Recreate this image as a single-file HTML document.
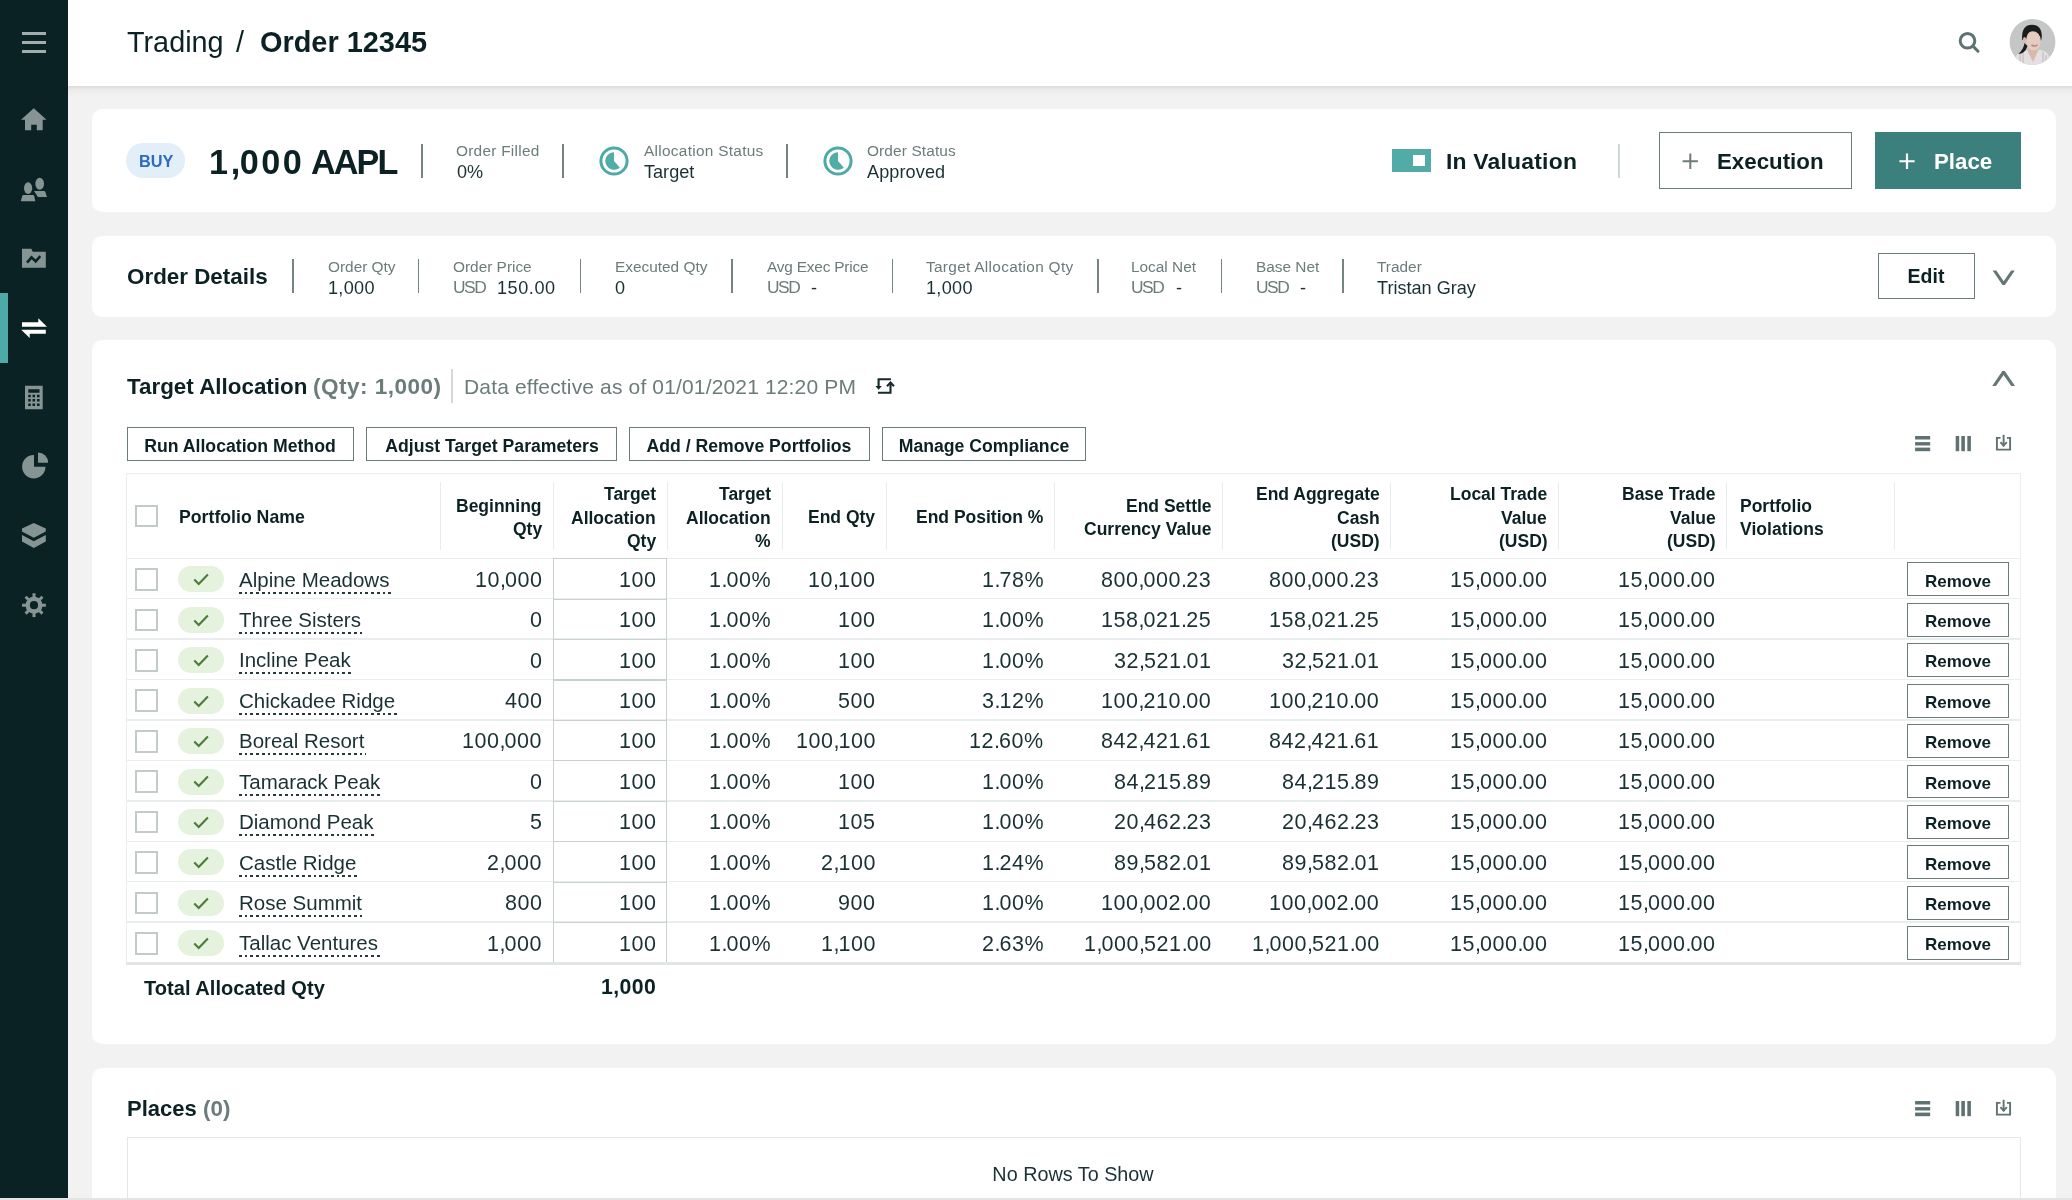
<!DOCTYPE html><html><head><meta charset="utf-8"><style>
html,body{margin:0;padding:0;}
body{width:2072px;height:1200px;overflow:hidden;position:relative;background:#f2f2f2;font-family:'Liberation Sans',sans-serif;}
.t{position:absolute;white-space:nowrap;will-change:transform;}
.r{position:absolute;}
.pn{letter-spacing:-0.95px;}
.nm::after{content:'';position:absolute;left:0;right:-1.5px;top:21.6px;height:2px;background:repeating-linear-gradient(90deg,#243a3c 0 2.7px,transparent 2.7px 5.75px);}
</style></head><body>
<div class="r" style="left:68.00px;top:0.00px;width:2004.00px;height:86.00px;background:#ffffff;"></div>
<div class="r" style="left:68.00px;top:86.00px;width:2004.00px;height:10.00px;background:linear-gradient(#dadada,#ececec 40%,#f2f2f2);"></div>
<div class="r" style="left:0.00px;top:0.00px;width:68.30px;height:1200.00px;background:#0b2224;"></div>
<div class="r" style="left:0.00px;top:293.00px;width:8.00px;height:70.00px;background:#4eaaa6;"></div>
<div class="r" style="left:22.00px;top:32.20px;width:24.00px;height:2.60px;background:#a2aead;"></div>
<div class="r" style="left:22.00px;top:41.20px;width:24.00px;height:2.60px;background:#a2aead;"></div>
<div class="r" style="left:22.00px;top:50.10px;width:24.00px;height:2.60px;background:#a2aead;"></div>
<svg class="r" style="left:0;top:0" width="68" height="640" viewBox="0 0 68 640">
<path fill="#869594" d="M21 119.7 L33.8 108.3 L46.5 119.7 L42.7 119.7 L42.7 130.2 L36.8 130.2 L36.8 124.8 L31.2 124.8 L31.2 130.2 L25 130.2 L25 119.7 Z"/>
<ellipse fill="#869594" cx="28.1" cy="188.2" rx="4.1" ry="5.85"/>
<path fill="#869594" d="M23.4 195 L33 195 Q33.8 195 34.2 196 L35.3 201.2 L20.8 201.2 L22.2 196 Q22.6 195 23.4 195 Z"/>
<ellipse fill="#869594" cx="39.7" cy="183.75" rx="4.35" ry="5.95"/>
<path fill="#869594" d="M34 191 L44 191 Q45 191 45.4 192.2 L47 197 L38 197 Z"/>
<path fill="#869594" d="M22 248.8 L31.3 248.8 L32.7 251.7 L45.8 251.7 L45.8 267.7 L22 267.7 Z"/>
<polyline fill="none" stroke="#0c2325" stroke-width="2.6" points="27,262.7 31.5,257.3 35.7,261.3 40.3,256.2"/>
<path fill="#ffffff" d="M22 322.2 L38.3 322.2 L38.3 318.3 L47 326.8 L22 326.8 Z"/>
<path fill="#ffffff" d="M21.2 329.7 L45.8 329.7 L45.8 333.8 L29.7 333.8 L29.7 338 Z"/>
<path fill="#869594" fill-rule="evenodd" d="M25 385.8 H42.7 V409.2 H25 Z M28.3 389.2 V392.7 H39.5 V389.2 Z
 M28.2 394.7 h2.6 v2.6 h-2.6 Z M32.5 394.7 h2.6 v2.6 h-2.6 Z M37 394.7 h2.6 v2.6 h-2.6 Z
 M28.2 399 h2.6 v2.6 h-2.6 Z M32.5 399 h2.6 v2.6 h-2.6 Z M37 399 h2.6 v2.6 h-2.6 Z
 M28.2 403.4 h2.6 v2.6 h-2.6 Z M32.5 403.4 h2.6 v2.6 h-2.6 Z M37 403.4 h2.6 v2.6 h-2.6 Z"/>
<path fill="#869594" d="M34 455 A11.7 11.7 0 1 0 45.5 466.7 L34 466.7 Z"/>
<path fill="#869594" d="M38 452.5 A10.2 10.2 0 0 1 48.2 462.7 L38 462.7 Z"/>
<path fill="#869594" d="M22 528.6 L33.8 523 L45.8 528.6 L45.8 531.6 L33.8 537.7 L22 531.6 Z"/>
<path fill="#869594" d="M22 535 L33.8 541.3 L45.8 535 L45.8 541.6 L33.8 548 L22 541.6 Z"/>
<line x1="34.00" y1="598.20" x2="34.00" y2="593.30" stroke="#869594" stroke-width="3"/><line x1="38.95" y1="600.25" x2="42.41" y2="596.79" stroke="#869594" stroke-width="3"/><line x1="41.00" y1="605.20" x2="45.90" y2="605.20" stroke="#869594" stroke-width="3"/><line x1="38.95" y1="610.15" x2="42.41" y2="613.61" stroke="#869594" stroke-width="3"/><line x1="34.00" y1="612.20" x2="34.00" y2="617.10" stroke="#869594" stroke-width="3"/><line x1="29.05" y1="610.15" x2="25.59" y2="613.61" stroke="#869594" stroke-width="3"/><line x1="27.00" y1="605.20" x2="22.10" y2="605.20" stroke="#869594" stroke-width="3"/><line x1="29.05" y1="600.25" x2="25.59" y2="596.79" stroke="#869594" stroke-width="3"/><circle cx="34" cy="605.2" r="6.3" fill="none" stroke="#869594" stroke-width="4.4"/></svg>
<div class="t " style="top:28.21px;font-size:28.8px;line-height:28.8px;font-weight:normal;color:#0b2123;left:126.50px;">Trading</div>
<div class="t " style="top:28.21px;font-size:28.8px;line-height:28.8px;font-weight:normal;color:#0b2123;left:236.00px;">/</div>
<div class="t " style="top:28.12px;font-size:28.9px;line-height:28.9px;font-weight:bold;color:#0b2123;left:260.00px;">Order 12345</div>
<svg class="r" style="left:1950px;top:25px" width="40" height="40" viewBox="1950 25 40 40"><circle cx="1967.5" cy="40.8" r="7.3" fill="none" stroke="#5f7271" stroke-width="3"/><line x1="1973.2" y1="46.4" x2="1978" y2="51.2" stroke="#5f7271" stroke-width="3" stroke-linecap="round"/></svg>
<svg class="r" style="left:2008px;top:18px" width="50" height="50" viewBox="2008 18 50 50">
<defs><clipPath id="av"><circle cx="2032.5" cy="42" r="22.9"/></clipPath></defs>
<circle cx="2032.5" cy="42" r="22.9" fill="#c4c7c6"/>
<g clip-path="url(#av)">
<path d="M2014 66 L2016 56 Q2019 51 2026 50 L2040 50 Q2047 51 2049 56 L2051 66 Z" fill="#e4e0e2"/>
<path d="M2020 54 V66 M2023 52 V66 M2043 52 V66 M2046 55 V66" stroke="#b9b0b4" stroke-width="0.9"/>
<path d="M2027 50 L2038.5 50 L2033 62 Z" fill="#d9b9a9"/>
<ellipse cx="2033.6" cy="40.6" rx="7.3" ry="9.6" fill="#e6ccc0"/>
<path d="M2022.2 40 Q2021 25 2032 24.8 Q2042 25 2041.8 37 L2041 41 Q2040 31 2032 31.2 Q2027 31.5 2026 40 Z" fill="#1c1c1c"/>
<path d="M2024.5 43 Q2023.5 50 2018 54 Q2025 54 2027.5 46 Z" fill="#1c1c1c"/>
<ellipse cx="2024.5" cy="39.5" rx="1.6" ry="2.6" fill="#d9b8a8"/>
<path d="M2031.5 45 Q2034.5 47 2037.5 45" stroke="#b98a82" stroke-width="1.6" fill="none"/>
</g></svg>
<div class="r" style="left:92.00px;top:108.80px;width:1963.50px;height:103.50px;background:#ffffff;border-radius:10px;"></div>
<div class="r" style="left:92.00px;top:235.80px;width:1963.50px;height:80.90px;background:#ffffff;border-radius:10px;"></div>
<div class="r" style="left:92.00px;top:340.30px;width:1963.50px;height:703.50px;background:#ffffff;border-radius:10px;"></div>
<div class="r" style="left:92.00px;top:1067.50px;width:1963.50px;height:192.50px;background:#ffffff;border-radius:10px;"></div>
<div class="r" style="left:126.10px;top:143.40px;width:59.30px;height:34.60px;background:#e2eff9;border-radius:17.3px;"></div>
<div class="t " style="top:153.39px;font-size:16.3px;line-height:16.3px;font-weight:bold;color:#2c6bbf;left:138.50px;">BUY</div>
<div class="t " style="top:145.33px;font-size:34.2px;line-height:34.2px;font-weight:bold;color:#0b2123;letter-spacing:2.6px;left:208.50px;">1<span style="letter-spacing:-0.5px">,</span>000</div>
<div class="t " style="top:145.33px;font-size:34.2px;line-height:34.2px;font-weight:bold;color:#0b2123;letter-spacing:-1.9px;left:311.00px;">AAPL</div>
<div class="r" style="left:421.00px;top:143.70px;width:1.60px;height:34.30px;background:#748483;"></div>
<div class="t " style="top:142.66px;font-size:15.4px;line-height:15.4px;font-weight:normal;color:#6b7c7b;letter-spacing:0.26px;left:456.00px;">Order Filled</div>
<div class="t " style="top:163.27px;font-size:18.1px;line-height:18.1px;font-weight:normal;color:#1a3133;left:456.50px;">0%</div>
<div class="r" style="left:562.20px;top:143.70px;width:1.60px;height:34.30px;background:#748483;"></div>
<svg class="r" style="left:598.3px;top:144.6px" width="32" height="32" viewBox="598.3 144.6 32 32"><circle cx="614.3" cy="160.6" r="13.1" fill="none" stroke="#4fa9a4" stroke-width="3"/><path d="M614.3 160.6 L614.3 151.9 A8.7 8.7 0 1 0 620.10 167.05 Z" fill="#52aca7"/></svg>
<div class="t " style="top:142.66px;font-size:15.4px;line-height:15.4px;font-weight:normal;color:#6b7c7b;letter-spacing:0.29px;left:643.50px;">Allocation Status</div>
<div class="t " style="top:163.27px;font-size:18.1px;line-height:18.1px;font-weight:normal;color:#1a3133;left:643.50px;">Target</div>
<div class="r" style="left:786.20px;top:143.70px;width:1.60px;height:34.30px;background:#748483;"></div>
<svg class="r" style="left:822.4px;top:144.6px" width="32" height="32" viewBox="822.4 144.6 32 32"><circle cx="838.4" cy="160.6" r="13.1" fill="none" stroke="#4fa9a4" stroke-width="3"/><path d="M838.4 160.6 L838.4 151.9 A8.7 8.7 0 1 0 844.20 167.05 Z" fill="#52aca7"/></svg>
<div class="t " style="top:142.66px;font-size:15.4px;line-height:15.4px;font-weight:normal;color:#6b7c7b;letter-spacing:0.13px;left:867.00px;">Order Status</div>
<div class="t " style="top:163.27px;font-size:18.1px;line-height:18.1px;font-weight:normal;color:#1a3133;letter-spacing:0.1px;left:867.30px;">Approved</div>
<div class="r" style="left:1392.20px;top:149.20px;width:38.60px;height:23.10px;background:#52aba6;"></div>
<div class="r" style="left:1413.30px;top:154.90px;width:11.60px;height:11.50px;background:#ffffff;"></div>
<div class="t " style="top:150.10px;font-size:22.9px;line-height:22.9px;font-weight:bold;color:#0b2123;letter-spacing:0.22px;left:1446.00px;">In Valuation</div>
<div class="r" style="left:1618.20px;top:143.60px;width:1.50px;height:34.10px;background:#d3d9d8;"></div>
<div class="r" style="left:1658.60px;top:131.80px;width:193.40px;height:57.60px;box-sizing:border-box;border:1.6px solid #6b7c7b;background:transparent;"></div>
<svg class="r" style="left:1680px;top:150px" width="22" height="22" viewBox="1680 150 22 22"><path d="M1690.3 153.6 V168.9 M1682.6 161.25 H1697.9" stroke="#6b7c7b" stroke-width="2"/></svg>
<div class="t " style="top:150.61px;font-size:22.3px;line-height:22.3px;font-weight:bold;color:#0b2123;left:1717.00px;">Execution</div>
<div class="r" style="left:1875.00px;top:131.80px;width:145.70px;height:57.60px;background:#3b807c;"></div>
<svg class="r" style="left:1896px;top:150px" width="22" height="22" viewBox="1896 150 22 22"><path d="M1907 153.6 V168.9 M1899.4 161.25 H1914.6" stroke="#ffffff" stroke-width="2.2"/></svg>
<div class="t " style="top:150.61px;font-size:22.3px;line-height:22.3px;font-weight:bold;color:#ffffff;left:1933.50px;">Place</div>
<div class="t " style="top:265.73px;font-size:22.4px;line-height:22.4px;font-weight:bold;color:#0b2123;left:127.00px;">Order Details</div>
<div class="r" style="left:292.30px;top:259.20px;width:1.60px;height:34.10px;background:#748483;"></div>
<div class="r" style="left:417.80px;top:259.20px;width:1.60px;height:34.10px;background:#748483;"></div>
<div class="r" style="left:579.70px;top:259.20px;width:1.60px;height:34.10px;background:#748483;"></div>
<div class="r" style="left:731.40px;top:259.20px;width:1.60px;height:34.10px;background:#748483;"></div>
<div class="r" style="left:891.50px;top:259.20px;width:1.60px;height:34.10px;background:#748483;"></div>
<div class="r" style="left:1097.00px;top:259.20px;width:1.60px;height:34.10px;background:#748483;"></div>
<div class="r" style="left:1220.70px;top:259.20px;width:1.60px;height:34.10px;background:#748483;"></div>
<div class="r" style="left:1342.30px;top:259.20px;width:1.60px;height:34.10px;background:#748483;"></div>
<div class="t " style="top:258.76px;font-size:15.4px;line-height:15.4px;font-weight:normal;color:#6b7c7b;left:327.50px;">Order Qty</div>
<div class="t " style="top:278.87px;font-size:18.1px;line-height:18.1px;font-weight:normal;color:#1a3133;letter-spacing:0.3px;left:327.50px;">1,000</div>
<div class="t " style="top:258.76px;font-size:15.4px;line-height:15.4px;font-weight:normal;color:#6b7c7b;left:453.00px;">Order Price</div>
<div class="t " style="top:279.46px;font-size:17.4px;line-height:17.4px;font-weight:normal;color:#6b7c7b;letter-spacing:-1.5px;left:453.00px;">USD</div>
<div class="t " style="top:278.87px;font-size:18.1px;line-height:18.1px;font-weight:normal;color:#1a3133;letter-spacing:0.55px;left:497.30px;">150.00</div>
<div class="t " style="top:258.76px;font-size:15.4px;line-height:15.4px;font-weight:normal;color:#6b7c7b;left:615.00px;">Executed Qty</div>
<div class="t " style="top:278.87px;font-size:18.1px;line-height:18.1px;font-weight:normal;color:#1a3133;letter-spacing:0.3px;left:615.00px;">0</div>
<div class="t " style="top:258.76px;font-size:15.4px;line-height:15.4px;font-weight:normal;color:#6b7c7b;letter-spacing:-0.2px;left:766.50px;">Avg Exec Price</div>
<div class="t " style="top:279.46px;font-size:17.4px;line-height:17.4px;font-weight:normal;color:#6b7c7b;letter-spacing:-1.5px;left:766.50px;">USD</div>
<div class="t " style="top:278.87px;font-size:18.1px;line-height:18.1px;font-weight:normal;color:#1a3133;letter-spacing:0.55px;left:810.80px;">-</div>
<div class="t " style="top:258.76px;font-size:15.4px;line-height:15.4px;font-weight:normal;color:#6b7c7b;letter-spacing:0.3px;left:926.30px;">Target Allocation Qty</div>
<div class="t " style="top:278.87px;font-size:18.1px;line-height:18.1px;font-weight:normal;color:#1a3133;letter-spacing:0.3px;left:926.30px;">1,000</div>
<div class="t " style="top:258.76px;font-size:15.4px;line-height:15.4px;font-weight:normal;color:#6b7c7b;left:1131.30px;">Local Net</div>
<div class="t " style="top:279.46px;font-size:17.4px;line-height:17.4px;font-weight:normal;color:#6b7c7b;letter-spacing:-1.5px;left:1131.30px;">USD</div>
<div class="t " style="top:278.87px;font-size:18.1px;line-height:18.1px;font-weight:normal;color:#1a3133;letter-spacing:0.55px;left:1175.60px;">-</div>
<div class="t " style="top:258.76px;font-size:15.4px;line-height:15.4px;font-weight:normal;color:#6b7c7b;left:1256.00px;">Base Net</div>
<div class="t " style="top:279.46px;font-size:17.4px;line-height:17.4px;font-weight:normal;color:#6b7c7b;letter-spacing:-1.5px;left:1256.00px;">USD</div>
<div class="t " style="top:278.87px;font-size:18.1px;line-height:18.1px;font-weight:normal;color:#1a3133;letter-spacing:0.55px;left:1300.30px;">-</div>
<div class="t " style="top:258.76px;font-size:15.4px;line-height:15.4px;font-weight:normal;color:#6b7c7b;left:1377.00px;">Trader</div>
<div class="t " style="top:278.87px;font-size:18.1px;line-height:18.1px;font-weight:normal;color:#1a3133;left:1377.00px;">Tristan Gray</div>
<div class="r" style="left:1878.20px;top:253.30px;width:96.40px;height:45.70px;box-sizing:border-box;border:1.6px solid #6b7c7b;background:transparent;"></div>
<div class="t " style="top:267.08px;font-size:19.5px;line-height:19.5px;font-weight:bold;color:#0b2123;left:1326.40px;width:1200px;text-align:center;">Edit</div>
<svg class="r" style="left:1988px;top:264px" width="32" height="28" viewBox="1988 264 32 28"><path d="M1992.6 270.4 H1996.3 L2003.7 281.2 L2011.1 270.4 H2014.8 L2004.9 285 H2002.5 Z" fill="#647675"/></svg>
<div class="t " style="top:376.03px;font-size:22.4px;line-height:22.4px;font-weight:bold;color:#0b2123;left:126.50px;">Target Allocation</div>
<div class="t " style="top:375.86px;font-size:22.6px;line-height:22.6px;font-weight:bold;color:#6b7c7b;letter-spacing:0.45px;left:313.00px;">(Qty: 1,000)</div>
<div class="r" style="left:451.00px;top:369.00px;width:1.50px;height:34.00px;background:#d3d9d8;"></div>
<div class="t " style="top:375.81px;font-size:21.0px;line-height:21.0px;font-weight:normal;color:#6b7c7b;letter-spacing:0.15px;left:463.60px;">Data effective as of 01/01/2021 12:20 PM</div>
<svg class="r" style="left:870px;top:372px" width="30" height="26" viewBox="870 372 30 26">
<path d="M890.9 379.25 H878.6 V386.5" fill="none" stroke="#15292b" stroke-width="2.1"/>
<path d="M875.4 386 L881.8 386 L878.6 389.8 Z" fill="#15292b"/>
<path d="M878 392.75 H890.5 V383" fill="none" stroke="#15292b" stroke-width="2.1"/>
<polyline points="887,386.2 890.5,382.6 894,386.2" fill="none" stroke="#15292b" stroke-width="2.1"/>
</svg>
<svg class="r" style="left:1986px;top:364px" width="34" height="28" viewBox="1986 364 34 28"><path d="M1992.2 386 L2002.4 371.1 H2004.8 L2015 386 H2011.3 L2003.6 374.9 L1995.9 386 Z" fill="#647675"/></svg>
<div class="r" style="left:126.60px;top:426.60px;width:227.60px;height:34.00px;box-sizing:border-box;border:1.6px solid #6b7c7b;background:transparent;"></div>
<div class="t " style="top:437.55px;font-size:17.65px;line-height:17.65px;font-weight:bold;color:#0b2123;left:-359.60px;width:1200px;text-align:center;">Run Allocation Method</div>
<div class="r" style="left:366.00px;top:426.60px;width:251.10px;height:34.00px;box-sizing:border-box;border:1.6px solid #6b7c7b;background:transparent;"></div>
<div class="t " style="top:437.55px;font-size:17.65px;line-height:17.65px;font-weight:bold;color:#0b2123;left:-108.45px;width:1200px;text-align:center;">Adjust Target Parameters</div>
<div class="r" style="left:629.00px;top:426.60px;width:240.70px;height:34.00px;box-sizing:border-box;border:1.6px solid #6b7c7b;background:transparent;"></div>
<div class="t " style="top:437.55px;font-size:17.65px;line-height:17.65px;font-weight:bold;color:#0b2123;left:149.35px;width:1200px;text-align:center;">Add / Remove Portfolios</div>
<div class="r" style="left:881.90px;top:426.60px;width:204.30px;height:34.00px;box-sizing:border-box;border:1.6px solid #6b7c7b;background:transparent;"></div>
<div class="t " style="top:437.55px;font-size:17.65px;line-height:17.65px;font-weight:bold;color:#0b2123;left:384.05px;width:1200px;text-align:center;">Manage Compliance</div>
<svg class="r" style="left:1910px;top:424px" width="110" height="28" viewBox="1910 424 110 28">
<rect x="1915.1" y="436" width="15.1" height="3.5" fill="#5f7271"/><rect x="1915.1" y="442.1" width="15.1" height="3.4" fill="#5f7271"/><rect x="1915.1" y="447.6" width="15.1" height="3.6" fill="#5f7271"/>
<rect x="1955.7" y="436" width="3.5" height="15.2" fill="#5f7271"/><rect x="1961.3" y="436" width="3.6" height="15.2" fill="#5f7271"/><rect x="1967.3" y="436" width="3.6" height="15.2" fill="#5f7271"/>
<path d="M2000.5 437.9 H1996.9 V449.6 H2010.1 V437.9 H2006.9" fill="none" stroke="#5f7271" stroke-width="1.9"/>
<path d="M2003.6 434.8 V446.2" stroke="#5f7271" stroke-width="1.9"/>
<polyline points="2000.4,442.1 2003.6,445.6 2006.8,442.1" fill="none" stroke="#5f7271" stroke-width="1.9"/>
</svg>
<div class="r" style="left:126.00px;top:472.60px;width:1894.80px;height:491.20px;box-sizing:border-box;border:1.9px solid #eceeee;background:transparent;"></div>
<div class="r" style="left:127.00px;top:557.50px;width:1893.50px;height:1.60px;background:#eaeded;"></div>
<div class="r" style="left:439.90px;top:481.80px;width:1.20px;height:68.00px;background:#e8ecec;"></div>
<div class="r" style="left:552.60px;top:481.80px;width:1.20px;height:68.00px;background:#e8ecec;"></div>
<div class="r" style="left:666.90px;top:481.80px;width:1.20px;height:68.00px;background:#e8ecec;"></div>
<div class="r" style="left:782.10px;top:481.80px;width:1.20px;height:68.00px;background:#e8ecec;"></div>
<div class="r" style="left:886.00px;top:481.80px;width:1.20px;height:68.00px;background:#e8ecec;"></div>
<div class="r" style="left:1053.80px;top:481.80px;width:1.20px;height:68.00px;background:#e8ecec;"></div>
<div class="r" style="left:1221.90px;top:481.80px;width:1.20px;height:68.00px;background:#e8ecec;"></div>
<div class="r" style="left:1390.20px;top:481.80px;width:1.20px;height:68.00px;background:#e8ecec;"></div>
<div class="r" style="left:1558.20px;top:481.80px;width:1.20px;height:68.00px;background:#e8ecec;"></div>
<div class="r" style="left:1726.00px;top:481.80px;width:1.20px;height:68.00px;background:#e8ecec;"></div>
<div class="r" style="left:1893.80px;top:481.80px;width:1.20px;height:68.00px;background:#e8ecec;"></div>
<div class="r" style="left:135.00px;top:504.80px;width:22.80px;height:22.60px;box-sizing:border-box;border:2.6px solid #c3caca;background:transparent;"></div>
<div class="t " style="top:509.21px;font-size:17.7px;line-height:17.7px;font-weight:bold;color:#0b2123;left:178.50px;">Portfolio Name</div>
<div class="t " style="top:497.88px;font-size:17.5px;line-height:17.5px;font-weight:bold;color:#0b2123;right:1530.20px;">Beginning</div>
<div class="t " style="top:521.38px;font-size:17.5px;line-height:17.5px;font-weight:bold;color:#0b2123;right:1530.20px;">Qty</div>
<div class="t " style="top:486.18px;font-size:17.5px;line-height:17.5px;font-weight:bold;color:#0b2123;right:1416.10px;">Target</div>
<div class="t " style="top:509.68px;font-size:17.5px;line-height:17.5px;font-weight:bold;color:#0b2123;right:1416.10px;">Allocation</div>
<div class="t " style="top:533.18px;font-size:17.5px;line-height:17.5px;font-weight:bold;color:#0b2123;right:1416.10px;">Qty</div>
<div class="t " style="top:486.18px;font-size:17.5px;line-height:17.5px;font-weight:bold;color:#0b2123;right:1301.00px;">Target</div>
<div class="t " style="top:509.68px;font-size:17.5px;line-height:17.5px;font-weight:bold;color:#0b2123;right:1301.00px;">Allocation</div>
<div class="t " style="top:533.18px;font-size:17.5px;line-height:17.5px;font-weight:bold;color:#0b2123;right:1301.00px;">%</div>
<div class="t " style="top:509.38px;font-size:17.5px;line-height:17.5px;font-weight:bold;color:#0b2123;right:1196.70px;">End Qty</div>
<div class="t " style="top:509.38px;font-size:17.5px;line-height:17.5px;font-weight:bold;color:#0b2123;right:1028.40px;">End Position %</div>
<div class="t " style="top:497.88px;font-size:17.5px;line-height:17.5px;font-weight:bold;color:#0b2123;right:860.80px;">End Settle</div>
<div class="t " style="top:521.38px;font-size:17.5px;line-height:17.5px;font-weight:bold;color:#0b2123;right:860.80px;">Currency Value</div>
<div class="t " style="top:486.18px;font-size:17.5px;line-height:17.5px;font-weight:bold;color:#0b2123;right:692.60px;">End Aggregate</div>
<div class="t " style="top:509.68px;font-size:17.5px;line-height:17.5px;font-weight:bold;color:#0b2123;right:692.60px;">Cash</div>
<div class="t " style="top:533.18px;font-size:17.5px;line-height:17.5px;font-weight:bold;color:#0b2123;right:692.60px;">(USD)</div>
<div class="t " style="top:486.18px;font-size:17.5px;line-height:17.5px;font-weight:bold;color:#0b2123;right:524.80px;">Local Trade</div>
<div class="t " style="top:509.68px;font-size:17.5px;line-height:17.5px;font-weight:bold;color:#0b2123;right:524.80px;">Value</div>
<div class="t " style="top:533.18px;font-size:17.5px;line-height:17.5px;font-weight:bold;color:#0b2123;right:524.80px;">(USD)</div>
<div class="t " style="top:486.18px;font-size:17.5px;line-height:17.5px;font-weight:bold;color:#0b2123;right:356.40px;">Base Trade</div>
<div class="t " style="top:509.68px;font-size:17.5px;line-height:17.5px;font-weight:bold;color:#0b2123;right:356.40px;">Value</div>
<div class="t " style="top:533.18px;font-size:17.5px;line-height:17.5px;font-weight:bold;color:#0b2123;right:356.40px;">(USD)</div>
<div class="t " style="top:497.88px;font-size:17.5px;line-height:17.5px;font-weight:bold;color:#0b2123;left:1740.00px;">Portfolio</div>
<div class="t " style="top:521.38px;font-size:17.5px;line-height:17.5px;font-weight:bold;color:#0b2123;letter-spacing:0.05px;left:1740.00px;">Violations</div>
<div class="r" style="left:127.00px;top:597.98px;width:1893.50px;height:1.50px;background:#eaeded;"></div>
<div class="r" style="left:552.60px;top:558.10px;width:114.60px;height:41.63px;box-sizing:border-box;border:1.9px solid #c9d0d0;background:transparent;"></div>
<div class="r" style="left:135.00px;top:568.10px;width:22.80px;height:22.80px;box-sizing:border-box;border:2.6px solid #c3caca;background:transparent;"></div>
<div class="r" style="left:178.10px;top:566.40px;width:46.30px;height:26.00px;background:#e4f2de;border-radius:13px;"></div>
<svg class="r" style="left:190px;top:570.30px" width="22" height="18" viewBox="0 0 22 18"><polyline points="4.3,9.6 8.7,14.1 17.9,4.6" fill="none" stroke="#4d7a3b" stroke-width="2.1"/></svg>
<div class="t nm" style="top:569.54px;font-size:20.5px;line-height:20.5px;font-weight:normal;color:#1a3133;left:239.00px;">Alpine Meadows</div>
<div class="t " style="top:569.69px;font-size:21.5px;line-height:21.5px;font-weight:normal;color:#1a3133;letter-spacing:0.55px;right:1530.20px;margin-right:-0.55px;">10<span class="pn">,</span>000</div>
<div class="t " style="top:569.69px;font-size:21.5px;line-height:21.5px;font-weight:normal;color:#1a3133;letter-spacing:0.55px;right:1416.40px;margin-right:-0.55px;">100</div>
<div class="t " style="top:569.69px;font-size:21.5px;line-height:21.5px;font-weight:normal;color:#1a3133;letter-spacing:0.55px;right:1301.20px;margin-right:-0.55px;">1<span class="pn">.</span>00%</div>
<div class="t " style="top:569.69px;font-size:21.5px;line-height:21.5px;font-weight:normal;color:#1a3133;letter-spacing:0.55px;right:1196.80px;margin-right:-0.55px;">10<span class="pn">,</span>100</div>
<div class="t " style="top:569.69px;font-size:21.5px;line-height:21.5px;font-weight:normal;color:#1a3133;letter-spacing:0.55px;right:1028.50px;margin-right:-0.55px;">1<span class="pn">.</span>78%</div>
<div class="t " style="top:569.69px;font-size:21.5px;line-height:21.5px;font-weight:normal;color:#1a3133;letter-spacing:0.55px;right:861.00px;margin-right:-0.55px;">800<span class="pn">,</span>000<span class="pn">.</span>23</div>
<div class="t " style="top:569.69px;font-size:21.5px;line-height:21.5px;font-weight:normal;color:#1a3133;letter-spacing:0.55px;right:693.00px;margin-right:-0.55px;">800<span class="pn">,</span>000<span class="pn">.</span>23</div>
<div class="t " style="top:569.69px;font-size:21.5px;line-height:21.5px;font-weight:normal;color:#1a3133;letter-spacing:0.55px;right:525.00px;margin-right:-0.55px;">15<span class="pn">,</span>000<span class="pn">.</span>00</div>
<div class="t " style="top:569.69px;font-size:21.5px;line-height:21.5px;font-weight:normal;color:#1a3133;letter-spacing:0.55px;right:356.60px;margin-right:-0.55px;">15<span class="pn">,</span>000<span class="pn">.</span>00</div>
<div class="r" style="left:1907.10px;top:562.40px;width:102.00px;height:33.90px;box-sizing:border-box;border:1.6px solid #6b7c7b;background:transparent;"></div>
<div class="t " style="top:572.60px;font-size:17px;line-height:17px;font-weight:bold;color:#0b2123;left:1358.10px;width:1200px;text-align:center;">Remove</div>
<div class="r" style="left:127.00px;top:638.41px;width:1893.50px;height:1.50px;background:#eaeded;"></div>
<div class="r" style="left:552.60px;top:598.53px;width:114.60px;height:41.63px;box-sizing:border-box;border:1.9px solid #c9d0d0;background:transparent;"></div>
<div class="r" style="left:135.00px;top:608.53px;width:22.80px;height:22.80px;box-sizing:border-box;border:2.6px solid #c3caca;background:transparent;"></div>
<div class="r" style="left:178.10px;top:606.83px;width:46.30px;height:26.00px;background:#e4f2de;border-radius:13px;"></div>
<svg class="r" style="left:190px;top:610.73px" width="22" height="18" viewBox="0 0 22 18"><polyline points="4.3,9.6 8.7,14.1 17.9,4.6" fill="none" stroke="#4d7a3b" stroke-width="2.1"/></svg>
<div class="t nm" style="top:609.97px;font-size:20.5px;line-height:20.5px;font-weight:normal;color:#1a3133;left:239.00px;">Three Sisters</div>
<div class="t " style="top:610.12px;font-size:21.5px;line-height:21.5px;font-weight:normal;color:#1a3133;letter-spacing:0.55px;right:1530.20px;margin-right:-0.55px;">0</div>
<div class="t " style="top:610.12px;font-size:21.5px;line-height:21.5px;font-weight:normal;color:#1a3133;letter-spacing:0.55px;right:1416.40px;margin-right:-0.55px;">100</div>
<div class="t " style="top:610.12px;font-size:21.5px;line-height:21.5px;font-weight:normal;color:#1a3133;letter-spacing:0.55px;right:1301.20px;margin-right:-0.55px;">1<span class="pn">.</span>00%</div>
<div class="t " style="top:610.12px;font-size:21.5px;line-height:21.5px;font-weight:normal;color:#1a3133;letter-spacing:0.55px;right:1196.80px;margin-right:-0.55px;">100</div>
<div class="t " style="top:610.12px;font-size:21.5px;line-height:21.5px;font-weight:normal;color:#1a3133;letter-spacing:0.55px;right:1028.50px;margin-right:-0.55px;">1<span class="pn">.</span>00%</div>
<div class="t " style="top:610.12px;font-size:21.5px;line-height:21.5px;font-weight:normal;color:#1a3133;letter-spacing:0.55px;right:861.00px;margin-right:-0.55px;">158<span class="pn">,</span>021<span class="pn">.</span>25</div>
<div class="t " style="top:610.12px;font-size:21.5px;line-height:21.5px;font-weight:normal;color:#1a3133;letter-spacing:0.55px;right:693.00px;margin-right:-0.55px;">158<span class="pn">,</span>021<span class="pn">.</span>25</div>
<div class="t " style="top:610.12px;font-size:21.5px;line-height:21.5px;font-weight:normal;color:#1a3133;letter-spacing:0.55px;right:525.00px;margin-right:-0.55px;">15<span class="pn">,</span>000<span class="pn">.</span>00</div>
<div class="t " style="top:610.12px;font-size:21.5px;line-height:21.5px;font-weight:normal;color:#1a3133;letter-spacing:0.55px;right:356.60px;margin-right:-0.55px;">15<span class="pn">,</span>000<span class="pn">.</span>00</div>
<div class="r" style="left:1907.10px;top:602.83px;width:102.00px;height:33.90px;box-sizing:border-box;border:1.6px solid #6b7c7b;background:transparent;"></div>
<div class="t " style="top:613.03px;font-size:17px;line-height:17px;font-weight:bold;color:#0b2123;left:1358.10px;width:1200px;text-align:center;">Remove</div>
<div class="r" style="left:127.00px;top:678.84px;width:1893.50px;height:1.50px;background:#eaeded;"></div>
<div class="r" style="left:552.60px;top:638.96px;width:114.60px;height:41.63px;box-sizing:border-box;border:1.9px solid #c9d0d0;background:transparent;"></div>
<div class="r" style="left:135.00px;top:648.96px;width:22.80px;height:22.80px;box-sizing:border-box;border:2.6px solid #c3caca;background:transparent;"></div>
<div class="r" style="left:178.10px;top:647.26px;width:46.30px;height:26.00px;background:#e4f2de;border-radius:13px;"></div>
<svg class="r" style="left:190px;top:651.16px" width="22" height="18" viewBox="0 0 22 18"><polyline points="4.3,9.6 8.7,14.1 17.9,4.6" fill="none" stroke="#4d7a3b" stroke-width="2.1"/></svg>
<div class="t nm" style="top:650.40px;font-size:20.5px;line-height:20.5px;font-weight:normal;color:#1a3133;left:239.00px;">Incline Peak</div>
<div class="t " style="top:650.55px;font-size:21.5px;line-height:21.5px;font-weight:normal;color:#1a3133;letter-spacing:0.55px;right:1530.20px;margin-right:-0.55px;">0</div>
<div class="t " style="top:650.55px;font-size:21.5px;line-height:21.5px;font-weight:normal;color:#1a3133;letter-spacing:0.55px;right:1416.40px;margin-right:-0.55px;">100</div>
<div class="t " style="top:650.55px;font-size:21.5px;line-height:21.5px;font-weight:normal;color:#1a3133;letter-spacing:0.55px;right:1301.20px;margin-right:-0.55px;">1<span class="pn">.</span>00%</div>
<div class="t " style="top:650.55px;font-size:21.5px;line-height:21.5px;font-weight:normal;color:#1a3133;letter-spacing:0.55px;right:1196.80px;margin-right:-0.55px;">100</div>
<div class="t " style="top:650.55px;font-size:21.5px;line-height:21.5px;font-weight:normal;color:#1a3133;letter-spacing:0.55px;right:1028.50px;margin-right:-0.55px;">1<span class="pn">.</span>00%</div>
<div class="t " style="top:650.55px;font-size:21.5px;line-height:21.5px;font-weight:normal;color:#1a3133;letter-spacing:0.55px;right:861.00px;margin-right:-0.55px;">32<span class="pn">,</span>521<span class="pn">.</span>01</div>
<div class="t " style="top:650.55px;font-size:21.5px;line-height:21.5px;font-weight:normal;color:#1a3133;letter-spacing:0.55px;right:693.00px;margin-right:-0.55px;">32<span class="pn">,</span>521<span class="pn">.</span>01</div>
<div class="t " style="top:650.55px;font-size:21.5px;line-height:21.5px;font-weight:normal;color:#1a3133;letter-spacing:0.55px;right:525.00px;margin-right:-0.55px;">15<span class="pn">,</span>000<span class="pn">.</span>00</div>
<div class="t " style="top:650.55px;font-size:21.5px;line-height:21.5px;font-weight:normal;color:#1a3133;letter-spacing:0.55px;right:356.60px;margin-right:-0.55px;">15<span class="pn">,</span>000<span class="pn">.</span>00</div>
<div class="r" style="left:1907.10px;top:643.26px;width:102.00px;height:33.90px;box-sizing:border-box;border:1.6px solid #6b7c7b;background:transparent;"></div>
<div class="t " style="top:653.46px;font-size:17px;line-height:17px;font-weight:bold;color:#0b2123;left:1358.10px;width:1200px;text-align:center;">Remove</div>
<div class="r" style="left:127.00px;top:719.27px;width:1893.50px;height:1.50px;background:#eaeded;"></div>
<div class="r" style="left:552.60px;top:679.39px;width:114.60px;height:41.63px;box-sizing:border-box;border:1.9px solid #c9d0d0;background:transparent;"></div>
<div class="r" style="left:135.00px;top:689.39px;width:22.80px;height:22.80px;box-sizing:border-box;border:2.6px solid #c3caca;background:transparent;"></div>
<div class="r" style="left:178.10px;top:687.69px;width:46.30px;height:26.00px;background:#e4f2de;border-radius:13px;"></div>
<svg class="r" style="left:190px;top:691.59px" width="22" height="18" viewBox="0 0 22 18"><polyline points="4.3,9.6 8.7,14.1 17.9,4.6" fill="none" stroke="#4d7a3b" stroke-width="2.1"/></svg>
<div class="t nm" style="top:690.83px;font-size:20.5px;line-height:20.5px;font-weight:normal;color:#1a3133;left:239.00px;">Chickadee Ridge</div>
<div class="t " style="top:690.98px;font-size:21.5px;line-height:21.5px;font-weight:normal;color:#1a3133;letter-spacing:0.55px;right:1530.20px;margin-right:-0.55px;">400</div>
<div class="t " style="top:690.98px;font-size:21.5px;line-height:21.5px;font-weight:normal;color:#1a3133;letter-spacing:0.55px;right:1416.40px;margin-right:-0.55px;">100</div>
<div class="t " style="top:690.98px;font-size:21.5px;line-height:21.5px;font-weight:normal;color:#1a3133;letter-spacing:0.55px;right:1301.20px;margin-right:-0.55px;">1<span class="pn">.</span>00%</div>
<div class="t " style="top:690.98px;font-size:21.5px;line-height:21.5px;font-weight:normal;color:#1a3133;letter-spacing:0.55px;right:1196.80px;margin-right:-0.55px;">500</div>
<div class="t " style="top:690.98px;font-size:21.5px;line-height:21.5px;font-weight:normal;color:#1a3133;letter-spacing:0.55px;right:1028.50px;margin-right:-0.55px;">3<span class="pn">.</span>12%</div>
<div class="t " style="top:690.98px;font-size:21.5px;line-height:21.5px;font-weight:normal;color:#1a3133;letter-spacing:0.55px;right:861.00px;margin-right:-0.55px;">100<span class="pn">,</span>210<span class="pn">.</span>00</div>
<div class="t " style="top:690.98px;font-size:21.5px;line-height:21.5px;font-weight:normal;color:#1a3133;letter-spacing:0.55px;right:693.00px;margin-right:-0.55px;">100<span class="pn">,</span>210<span class="pn">.</span>00</div>
<div class="t " style="top:690.98px;font-size:21.5px;line-height:21.5px;font-weight:normal;color:#1a3133;letter-spacing:0.55px;right:525.00px;margin-right:-0.55px;">15<span class="pn">,</span>000<span class="pn">.</span>00</div>
<div class="t " style="top:690.98px;font-size:21.5px;line-height:21.5px;font-weight:normal;color:#1a3133;letter-spacing:0.55px;right:356.60px;margin-right:-0.55px;">15<span class="pn">,</span>000<span class="pn">.</span>00</div>
<div class="r" style="left:1907.10px;top:683.69px;width:102.00px;height:33.90px;box-sizing:border-box;border:1.6px solid #6b7c7b;background:transparent;"></div>
<div class="t " style="top:693.89px;font-size:17px;line-height:17px;font-weight:bold;color:#0b2123;left:1358.10px;width:1200px;text-align:center;">Remove</div>
<div class="r" style="left:127.00px;top:759.70px;width:1893.50px;height:1.50px;background:#eaeded;"></div>
<div class="r" style="left:552.60px;top:719.82px;width:114.60px;height:41.63px;box-sizing:border-box;border:1.9px solid #c9d0d0;background:transparent;"></div>
<div class="r" style="left:135.00px;top:729.82px;width:22.80px;height:22.80px;box-sizing:border-box;border:2.6px solid #c3caca;background:transparent;"></div>
<div class="r" style="left:178.10px;top:728.12px;width:46.30px;height:26.00px;background:#e4f2de;border-radius:13px;"></div>
<svg class="r" style="left:190px;top:732.02px" width="22" height="18" viewBox="0 0 22 18"><polyline points="4.3,9.6 8.7,14.1 17.9,4.6" fill="none" stroke="#4d7a3b" stroke-width="2.1"/></svg>
<div class="t nm" style="top:731.26px;font-size:20.5px;line-height:20.5px;font-weight:normal;color:#1a3133;left:239.00px;">Boreal Resort</div>
<div class="t " style="top:731.41px;font-size:21.5px;line-height:21.5px;font-weight:normal;color:#1a3133;letter-spacing:0.55px;right:1530.20px;margin-right:-0.55px;">100<span class="pn">,</span>000</div>
<div class="t " style="top:731.41px;font-size:21.5px;line-height:21.5px;font-weight:normal;color:#1a3133;letter-spacing:0.55px;right:1416.40px;margin-right:-0.55px;">100</div>
<div class="t " style="top:731.41px;font-size:21.5px;line-height:21.5px;font-weight:normal;color:#1a3133;letter-spacing:0.55px;right:1301.20px;margin-right:-0.55px;">1<span class="pn">.</span>00%</div>
<div class="t " style="top:731.41px;font-size:21.5px;line-height:21.5px;font-weight:normal;color:#1a3133;letter-spacing:0.55px;right:1196.80px;margin-right:-0.55px;">100<span class="pn">,</span>100</div>
<div class="t " style="top:731.41px;font-size:21.5px;line-height:21.5px;font-weight:normal;color:#1a3133;letter-spacing:0.55px;right:1028.50px;margin-right:-0.55px;">12<span class="pn">.</span>60%</div>
<div class="t " style="top:731.41px;font-size:21.5px;line-height:21.5px;font-weight:normal;color:#1a3133;letter-spacing:0.55px;right:861.00px;margin-right:-0.55px;">842<span class="pn">,</span>421<span class="pn">.</span>61</div>
<div class="t " style="top:731.41px;font-size:21.5px;line-height:21.5px;font-weight:normal;color:#1a3133;letter-spacing:0.55px;right:693.00px;margin-right:-0.55px;">842<span class="pn">,</span>421<span class="pn">.</span>61</div>
<div class="t " style="top:731.41px;font-size:21.5px;line-height:21.5px;font-weight:normal;color:#1a3133;letter-spacing:0.55px;right:525.00px;margin-right:-0.55px;">15<span class="pn">,</span>000<span class="pn">.</span>00</div>
<div class="t " style="top:731.41px;font-size:21.5px;line-height:21.5px;font-weight:normal;color:#1a3133;letter-spacing:0.55px;right:356.60px;margin-right:-0.55px;">15<span class="pn">,</span>000<span class="pn">.</span>00</div>
<div class="r" style="left:1907.10px;top:724.12px;width:102.00px;height:33.90px;box-sizing:border-box;border:1.6px solid #6b7c7b;background:transparent;"></div>
<div class="t " style="top:734.32px;font-size:17px;line-height:17px;font-weight:bold;color:#0b2123;left:1358.10px;width:1200px;text-align:center;">Remove</div>
<div class="r" style="left:127.00px;top:800.13px;width:1893.50px;height:1.50px;background:#eaeded;"></div>
<div class="r" style="left:552.60px;top:760.25px;width:114.60px;height:41.63px;box-sizing:border-box;border:1.9px solid #c9d0d0;background:transparent;"></div>
<div class="r" style="left:135.00px;top:770.25px;width:22.80px;height:22.80px;box-sizing:border-box;border:2.6px solid #c3caca;background:transparent;"></div>
<div class="r" style="left:178.10px;top:768.55px;width:46.30px;height:26.00px;background:#e4f2de;border-radius:13px;"></div>
<svg class="r" style="left:190px;top:772.45px" width="22" height="18" viewBox="0 0 22 18"><polyline points="4.3,9.6 8.7,14.1 17.9,4.6" fill="none" stroke="#4d7a3b" stroke-width="2.1"/></svg>
<div class="t nm" style="top:771.69px;font-size:20.5px;line-height:20.5px;font-weight:normal;color:#1a3133;left:239.00px;">Tamarack Peak</div>
<div class="t " style="top:771.84px;font-size:21.5px;line-height:21.5px;font-weight:normal;color:#1a3133;letter-spacing:0.55px;right:1530.20px;margin-right:-0.55px;">0</div>
<div class="t " style="top:771.84px;font-size:21.5px;line-height:21.5px;font-weight:normal;color:#1a3133;letter-spacing:0.55px;right:1416.40px;margin-right:-0.55px;">100</div>
<div class="t " style="top:771.84px;font-size:21.5px;line-height:21.5px;font-weight:normal;color:#1a3133;letter-spacing:0.55px;right:1301.20px;margin-right:-0.55px;">1<span class="pn">.</span>00%</div>
<div class="t " style="top:771.84px;font-size:21.5px;line-height:21.5px;font-weight:normal;color:#1a3133;letter-spacing:0.55px;right:1196.80px;margin-right:-0.55px;">100</div>
<div class="t " style="top:771.84px;font-size:21.5px;line-height:21.5px;font-weight:normal;color:#1a3133;letter-spacing:0.55px;right:1028.50px;margin-right:-0.55px;">1<span class="pn">.</span>00%</div>
<div class="t " style="top:771.84px;font-size:21.5px;line-height:21.5px;font-weight:normal;color:#1a3133;letter-spacing:0.55px;right:861.00px;margin-right:-0.55px;">84<span class="pn">,</span>215<span class="pn">.</span>89</div>
<div class="t " style="top:771.84px;font-size:21.5px;line-height:21.5px;font-weight:normal;color:#1a3133;letter-spacing:0.55px;right:693.00px;margin-right:-0.55px;">84<span class="pn">,</span>215<span class="pn">.</span>89</div>
<div class="t " style="top:771.84px;font-size:21.5px;line-height:21.5px;font-weight:normal;color:#1a3133;letter-spacing:0.55px;right:525.00px;margin-right:-0.55px;">15<span class="pn">,</span>000<span class="pn">.</span>00</div>
<div class="t " style="top:771.84px;font-size:21.5px;line-height:21.5px;font-weight:normal;color:#1a3133;letter-spacing:0.55px;right:356.60px;margin-right:-0.55px;">15<span class="pn">,</span>000<span class="pn">.</span>00</div>
<div class="r" style="left:1907.10px;top:764.55px;width:102.00px;height:33.90px;box-sizing:border-box;border:1.6px solid #6b7c7b;background:transparent;"></div>
<div class="t " style="top:774.75px;font-size:17px;line-height:17px;font-weight:bold;color:#0b2123;left:1358.10px;width:1200px;text-align:center;">Remove</div>
<div class="r" style="left:127.00px;top:840.56px;width:1893.50px;height:1.50px;background:#eaeded;"></div>
<div class="r" style="left:552.60px;top:800.68px;width:114.60px;height:41.63px;box-sizing:border-box;border:1.9px solid #c9d0d0;background:transparent;"></div>
<div class="r" style="left:135.00px;top:810.68px;width:22.80px;height:22.80px;box-sizing:border-box;border:2.6px solid #c3caca;background:transparent;"></div>
<div class="r" style="left:178.10px;top:808.98px;width:46.30px;height:26.00px;background:#e4f2de;border-radius:13px;"></div>
<svg class="r" style="left:190px;top:812.88px" width="22" height="18" viewBox="0 0 22 18"><polyline points="4.3,9.6 8.7,14.1 17.9,4.6" fill="none" stroke="#4d7a3b" stroke-width="2.1"/></svg>
<div class="t nm" style="top:812.12px;font-size:20.5px;line-height:20.5px;font-weight:normal;color:#1a3133;left:239.00px;">Diamond Peak</div>
<div class="t " style="top:812.27px;font-size:21.5px;line-height:21.5px;font-weight:normal;color:#1a3133;letter-spacing:0.55px;right:1530.20px;margin-right:-0.55px;">5</div>
<div class="t " style="top:812.27px;font-size:21.5px;line-height:21.5px;font-weight:normal;color:#1a3133;letter-spacing:0.55px;right:1416.40px;margin-right:-0.55px;">100</div>
<div class="t " style="top:812.27px;font-size:21.5px;line-height:21.5px;font-weight:normal;color:#1a3133;letter-spacing:0.55px;right:1301.20px;margin-right:-0.55px;">1<span class="pn">.</span>00%</div>
<div class="t " style="top:812.27px;font-size:21.5px;line-height:21.5px;font-weight:normal;color:#1a3133;letter-spacing:0.55px;right:1196.80px;margin-right:-0.55px;">105</div>
<div class="t " style="top:812.27px;font-size:21.5px;line-height:21.5px;font-weight:normal;color:#1a3133;letter-spacing:0.55px;right:1028.50px;margin-right:-0.55px;">1<span class="pn">.</span>00%</div>
<div class="t " style="top:812.27px;font-size:21.5px;line-height:21.5px;font-weight:normal;color:#1a3133;letter-spacing:0.55px;right:861.00px;margin-right:-0.55px;">20<span class="pn">,</span>462<span class="pn">.</span>23</div>
<div class="t " style="top:812.27px;font-size:21.5px;line-height:21.5px;font-weight:normal;color:#1a3133;letter-spacing:0.55px;right:693.00px;margin-right:-0.55px;">20<span class="pn">,</span>462<span class="pn">.</span>23</div>
<div class="t " style="top:812.27px;font-size:21.5px;line-height:21.5px;font-weight:normal;color:#1a3133;letter-spacing:0.55px;right:525.00px;margin-right:-0.55px;">15<span class="pn">,</span>000<span class="pn">.</span>00</div>
<div class="t " style="top:812.27px;font-size:21.5px;line-height:21.5px;font-weight:normal;color:#1a3133;letter-spacing:0.55px;right:356.60px;margin-right:-0.55px;">15<span class="pn">,</span>000<span class="pn">.</span>00</div>
<div class="r" style="left:1907.10px;top:804.98px;width:102.00px;height:33.90px;box-sizing:border-box;border:1.6px solid #6b7c7b;background:transparent;"></div>
<div class="t " style="top:815.18px;font-size:17px;line-height:17px;font-weight:bold;color:#0b2123;left:1358.10px;width:1200px;text-align:center;">Remove</div>
<div class="r" style="left:127.00px;top:880.99px;width:1893.50px;height:1.50px;background:#eaeded;"></div>
<div class="r" style="left:552.60px;top:841.11px;width:114.60px;height:41.63px;box-sizing:border-box;border:1.9px solid #c9d0d0;background:transparent;"></div>
<div class="r" style="left:135.00px;top:851.11px;width:22.80px;height:22.80px;box-sizing:border-box;border:2.6px solid #c3caca;background:transparent;"></div>
<div class="r" style="left:178.10px;top:849.41px;width:46.30px;height:26.00px;background:#e4f2de;border-radius:13px;"></div>
<svg class="r" style="left:190px;top:853.31px" width="22" height="18" viewBox="0 0 22 18"><polyline points="4.3,9.6 8.7,14.1 17.9,4.6" fill="none" stroke="#4d7a3b" stroke-width="2.1"/></svg>
<div class="t nm" style="top:852.55px;font-size:20.5px;line-height:20.5px;font-weight:normal;color:#1a3133;left:239.00px;">Castle Ridge</div>
<div class="t " style="top:852.70px;font-size:21.5px;line-height:21.5px;font-weight:normal;color:#1a3133;letter-spacing:0.55px;right:1530.20px;margin-right:-0.55px;">2<span class="pn">,</span>000</div>
<div class="t " style="top:852.70px;font-size:21.5px;line-height:21.5px;font-weight:normal;color:#1a3133;letter-spacing:0.55px;right:1416.40px;margin-right:-0.55px;">100</div>
<div class="t " style="top:852.70px;font-size:21.5px;line-height:21.5px;font-weight:normal;color:#1a3133;letter-spacing:0.55px;right:1301.20px;margin-right:-0.55px;">1<span class="pn">.</span>00%</div>
<div class="t " style="top:852.70px;font-size:21.5px;line-height:21.5px;font-weight:normal;color:#1a3133;letter-spacing:0.55px;right:1196.80px;margin-right:-0.55px;">2<span class="pn">,</span>100</div>
<div class="t " style="top:852.70px;font-size:21.5px;line-height:21.5px;font-weight:normal;color:#1a3133;letter-spacing:0.55px;right:1028.50px;margin-right:-0.55px;">1<span class="pn">.</span>24%</div>
<div class="t " style="top:852.70px;font-size:21.5px;line-height:21.5px;font-weight:normal;color:#1a3133;letter-spacing:0.55px;right:861.00px;margin-right:-0.55px;">89<span class="pn">,</span>582<span class="pn">.</span>01</div>
<div class="t " style="top:852.70px;font-size:21.5px;line-height:21.5px;font-weight:normal;color:#1a3133;letter-spacing:0.55px;right:693.00px;margin-right:-0.55px;">89<span class="pn">,</span>582<span class="pn">.</span>01</div>
<div class="t " style="top:852.70px;font-size:21.5px;line-height:21.5px;font-weight:normal;color:#1a3133;letter-spacing:0.55px;right:525.00px;margin-right:-0.55px;">15<span class="pn">,</span>000<span class="pn">.</span>00</div>
<div class="t " style="top:852.70px;font-size:21.5px;line-height:21.5px;font-weight:normal;color:#1a3133;letter-spacing:0.55px;right:356.60px;margin-right:-0.55px;">15<span class="pn">,</span>000<span class="pn">.</span>00</div>
<div class="r" style="left:1907.10px;top:845.41px;width:102.00px;height:33.90px;box-sizing:border-box;border:1.6px solid #6b7c7b;background:transparent;"></div>
<div class="t " style="top:855.61px;font-size:17px;line-height:17px;font-weight:bold;color:#0b2123;left:1358.10px;width:1200px;text-align:center;">Remove</div>
<div class="r" style="left:127.00px;top:921.42px;width:1893.50px;height:1.50px;background:#eaeded;"></div>
<div class="r" style="left:552.60px;top:881.54px;width:114.60px;height:41.63px;box-sizing:border-box;border:1.9px solid #c9d0d0;background:transparent;"></div>
<div class="r" style="left:135.00px;top:891.54px;width:22.80px;height:22.80px;box-sizing:border-box;border:2.6px solid #c3caca;background:transparent;"></div>
<div class="r" style="left:178.10px;top:889.84px;width:46.30px;height:26.00px;background:#e4f2de;border-radius:13px;"></div>
<svg class="r" style="left:190px;top:893.74px" width="22" height="18" viewBox="0 0 22 18"><polyline points="4.3,9.6 8.7,14.1 17.9,4.6" fill="none" stroke="#4d7a3b" stroke-width="2.1"/></svg>
<div class="t nm" style="top:892.98px;font-size:20.5px;line-height:20.5px;font-weight:normal;color:#1a3133;left:239.00px;">Rose Summit</div>
<div class="t " style="top:893.13px;font-size:21.5px;line-height:21.5px;font-weight:normal;color:#1a3133;letter-spacing:0.55px;right:1530.20px;margin-right:-0.55px;">800</div>
<div class="t " style="top:893.13px;font-size:21.5px;line-height:21.5px;font-weight:normal;color:#1a3133;letter-spacing:0.55px;right:1416.40px;margin-right:-0.55px;">100</div>
<div class="t " style="top:893.13px;font-size:21.5px;line-height:21.5px;font-weight:normal;color:#1a3133;letter-spacing:0.55px;right:1301.20px;margin-right:-0.55px;">1<span class="pn">.</span>00%</div>
<div class="t " style="top:893.13px;font-size:21.5px;line-height:21.5px;font-weight:normal;color:#1a3133;letter-spacing:0.55px;right:1196.80px;margin-right:-0.55px;">900</div>
<div class="t " style="top:893.13px;font-size:21.5px;line-height:21.5px;font-weight:normal;color:#1a3133;letter-spacing:0.55px;right:1028.50px;margin-right:-0.55px;">1<span class="pn">.</span>00%</div>
<div class="t " style="top:893.13px;font-size:21.5px;line-height:21.5px;font-weight:normal;color:#1a3133;letter-spacing:0.55px;right:861.00px;margin-right:-0.55px;">100<span class="pn">,</span>002<span class="pn">.</span>00</div>
<div class="t " style="top:893.13px;font-size:21.5px;line-height:21.5px;font-weight:normal;color:#1a3133;letter-spacing:0.55px;right:693.00px;margin-right:-0.55px;">100<span class="pn">,</span>002<span class="pn">.</span>00</div>
<div class="t " style="top:893.13px;font-size:21.5px;line-height:21.5px;font-weight:normal;color:#1a3133;letter-spacing:0.55px;right:525.00px;margin-right:-0.55px;">15<span class="pn">,</span>000<span class="pn">.</span>00</div>
<div class="t " style="top:893.13px;font-size:21.5px;line-height:21.5px;font-weight:normal;color:#1a3133;letter-spacing:0.55px;right:356.60px;margin-right:-0.55px;">15<span class="pn">,</span>000<span class="pn">.</span>00</div>
<div class="r" style="left:1907.10px;top:885.84px;width:102.00px;height:33.90px;box-sizing:border-box;border:1.6px solid #6b7c7b;background:transparent;"></div>
<div class="t " style="top:896.04px;font-size:17px;line-height:17px;font-weight:bold;color:#0b2123;left:1358.10px;width:1200px;text-align:center;">Remove</div>
<div class="r" style="left:552.60px;top:921.97px;width:114.60px;height:41.63px;box-sizing:border-box;border:1.9px solid #c9d0d0;background:transparent;"></div>
<div class="r" style="left:135.00px;top:931.97px;width:22.80px;height:22.80px;box-sizing:border-box;border:2.6px solid #c3caca;background:transparent;"></div>
<div class="r" style="left:178.10px;top:930.27px;width:46.30px;height:26.00px;background:#e4f2de;border-radius:13px;"></div>
<svg class="r" style="left:190px;top:934.17px" width="22" height="18" viewBox="0 0 22 18"><polyline points="4.3,9.6 8.7,14.1 17.9,4.6" fill="none" stroke="#4d7a3b" stroke-width="2.1"/></svg>
<div class="t nm" style="top:933.41px;font-size:20.5px;line-height:20.5px;font-weight:normal;color:#1a3133;left:239.00px;">Tallac Ventures</div>
<div class="t " style="top:933.56px;font-size:21.5px;line-height:21.5px;font-weight:normal;color:#1a3133;letter-spacing:0.55px;right:1530.20px;margin-right:-0.55px;">1<span class="pn">,</span>000</div>
<div class="t " style="top:933.56px;font-size:21.5px;line-height:21.5px;font-weight:normal;color:#1a3133;letter-spacing:0.55px;right:1416.40px;margin-right:-0.55px;">100</div>
<div class="t " style="top:933.56px;font-size:21.5px;line-height:21.5px;font-weight:normal;color:#1a3133;letter-spacing:0.55px;right:1301.20px;margin-right:-0.55px;">1<span class="pn">.</span>00%</div>
<div class="t " style="top:933.56px;font-size:21.5px;line-height:21.5px;font-weight:normal;color:#1a3133;letter-spacing:0.55px;right:1196.80px;margin-right:-0.55px;">1<span class="pn">,</span>100</div>
<div class="t " style="top:933.56px;font-size:21.5px;line-height:21.5px;font-weight:normal;color:#1a3133;letter-spacing:0.55px;right:1028.50px;margin-right:-0.55px;">2<span class="pn">.</span>63%</div>
<div class="t " style="top:933.56px;font-size:21.5px;line-height:21.5px;font-weight:normal;color:#1a3133;letter-spacing:0.55px;right:861.00px;margin-right:-0.55px;">1<span class="pn">,</span>000<span class="pn">,</span>521<span class="pn">.</span>00</div>
<div class="t " style="top:933.56px;font-size:21.5px;line-height:21.5px;font-weight:normal;color:#1a3133;letter-spacing:0.55px;right:693.00px;margin-right:-0.55px;">1<span class="pn">,</span>000<span class="pn">,</span>521<span class="pn">.</span>00</div>
<div class="t " style="top:933.56px;font-size:21.5px;line-height:21.5px;font-weight:normal;color:#1a3133;letter-spacing:0.55px;right:525.00px;margin-right:-0.55px;">15<span class="pn">,</span>000<span class="pn">.</span>00</div>
<div class="t " style="top:933.56px;font-size:21.5px;line-height:21.5px;font-weight:normal;color:#1a3133;letter-spacing:0.55px;right:356.60px;margin-right:-0.55px;">15<span class="pn">,</span>000<span class="pn">.</span>00</div>
<div class="r" style="left:1907.10px;top:926.27px;width:102.00px;height:33.90px;box-sizing:border-box;border:1.6px solid #6b7c7b;background:transparent;"></div>
<div class="t " style="top:936.47px;font-size:17px;line-height:17px;font-weight:bold;color:#0b2123;left:1358.10px;width:1200px;text-align:center;">Remove</div>
<div class="r" style="left:126.00px;top:962.00px;width:1894.80px;height:2.60px;background:#e1e5e5;"></div>
<div class="t " style="top:977.58px;font-size:20.1px;line-height:20.1px;font-weight:bold;color:#0b2123;left:144.00px;">Total Allocated Qty</div>
<div class="t " style="top:976.56px;font-size:21.3px;line-height:21.3px;font-weight:bold;color:#0b2123;letter-spacing:0.4px;right:1416.20px;margin-right:-0.4px;">1,000</div>
<div class="t " style="top:1097.97px;font-size:22.0px;line-height:22.0px;font-weight:bold;color:#0b2123;left:127.00px;">Places</div>
<div class="t " style="top:1097.63px;font-size:22.4px;line-height:22.4px;font-weight:bold;color:#6b7c7b;left:203.00px;">(0)</div>
<svg class="r" style="left:1910px;top:1089px" width="110" height="28" viewBox="1910 1089 110 28">
<rect x="1915.1" y="1101" width="15.1" height="3.5" fill="#5f7271"/><rect x="1915.1" y="1107.1" width="15.1" height="3.4" fill="#5f7271"/><rect x="1915.1" y="1112.6" width="15.1" height="3.6" fill="#5f7271"/>
<rect x="1955.7" y="1101" width="3.5" height="15.2" fill="#5f7271"/><rect x="1961.3" y="1101" width="3.6" height="15.2" fill="#5f7271"/><rect x="1967.3" y="1101" width="3.6" height="15.2" fill="#5f7271"/>
<path d="M2000.5 1102.9 H1996.9 V1114.6 H2010.1 V1102.9 H2006.9" fill="none" stroke="#5f7271" stroke-width="1.9"/>
<path d="M2003.6 1099.8 V1111.2" stroke="#5f7271" stroke-width="1.9"/>
<polyline points="2000.4,1107.1 2003.6,1110.6 2006.8,1107.1" fill="none" stroke="#5f7271" stroke-width="1.9"/>
</svg>
<div class="r" style="left:126.50px;top:1137.00px;width:1894.00px;height:120.00px;box-sizing:border-box;border:1.2px solid #e3e7e7;background:transparent;"></div>
<div class="t " style="top:1164.73px;font-size:19.8px;line-height:19.8px;font-weight:normal;color:#1a3133;left:473.00px;width:1200px;text-align:center;">No Rows To Show</div>
<div class="r" style="left:0.00px;top:1197.50px;width:2072.00px;height:2.50px;background:#e4e4e6;"></div>
</body></html>
